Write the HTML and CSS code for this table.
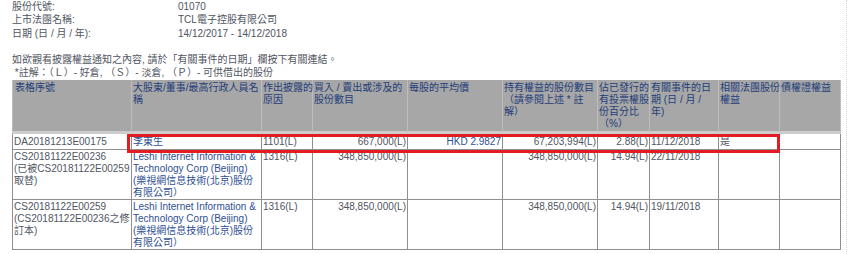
FILE: index.html
```html
<!DOCTYPE html>
<html lang="zh-Hant">
<head>
<meta charset="utf-8">
<title>披露權益</title>
<link rel="stylesheet" href="styles.css">
</head>
<body>
<div class="page">
  <div class="info">
    <div class="label">股份代號:</div><div class="value">01070</div>
    <div class="label">上市法團名稱:</div><div class="value">TCL電子控股有限公司</div>
    <div class="label">日期 (日 / 月 / 年):</div><div class="value">14/12/2017 - 14/12/2018</div>
  </div>
  <div class="notes">
    <p>如欲觀看披露權益通知之內容, 請於「有關事件的日期」欄按下有關連結。</p>
    <p>&nbsp;*註解：（Ｌ）- 好倉, （Ｓ）- 淡倉, （Ｐ）- 可供借出的股份</p>
  </div>
  <div class="table-wrap">
    <table class="grid">
      <colgroup>
        <col class="c1"><col class="c2"><col class="c3"><col class="c4"><col class="c5">
        <col class="c6"><col class="c7"><col class="c8"><col class="c9"><col class="c10">
      </colgroup>
      <thead>
        <tr>
          <th>表格序號</th>
          <th>大股東/董事/最高行政人員名<br>稱</th>
          <th>作出披露的<br>原因</th>
          <th>買入 / 賣出或涉及的<br>股份數目</th>
          <th>每股的平均價</th>
          <th>持有權益的股份數目<br>（請參閱上述 * 註<br>解）</th>
          <th>佔已發行的<br>有投票權股<br>份百分比<br>（%）</th>
          <th>有關事件的日<br>期 (日 / 月 /<br>年)</th>
          <th>相關法團股份<br>權益</th>
          <th>債權證權益</th>
        </tr>
      </thead>
      <tbody>
        <tr class="first">
          <td>DA20181213E00175</td>
          <td class="link">李東生</td>
          <td>1101(L)</td>
          <td class="num">667,000(L)</td>
          <td class="num link">HKD 2.9827</td>
          <td class="num">67,203,994(L)</td>
          <td class="num">2.88(L)</td>
          <td>11/12/2018</td>
          <td>是</td>
          <td></td>
        </tr>
        <tr>
          <td>CS20181122E00236<br>(已被CS20181122E00259<br>取替)</td>
          <td class="link">Leshi Internet Information &amp;<br>Technology Corp (Beijing)<br>(樂視網信息技術(北京)股份<br>有限公司）</td>
          <td>1316(L)</td>
          <td class="num">348,850,000(L)</td>
          <td class="num"></td>
          <td class="num">348,850,000(L)</td>
          <td class="num">14.94(L)</td>
          <td>22/11/2018</td>
          <td></td>
          <td></td>
        </tr>
        <tr>
          <td>CS20181122E00259<br>(CS20181122E00236之修<br>訂本)</td>
          <td class="link">Leshi Internet Information &amp;<br>Technology Corp (Beijing)<br>(樂視網信息技術(北京)股份<br>有限公司）</td>
          <td>1316(L)</td>
          <td class="num">348,850,000(L)</td>
          <td class="num"></td>
          <td class="num">348,850,000(L)</td>
          <td class="num">14.94(L)</td>
          <td>19/11/2018</td>
          <td></td>
          <td></td>
        </tr>
      </tbody>
    </table>
    <div class="highlight"></div>
  </div>
</div>
</body>
</html>
```
FILE: styles.css
```css
html, body {
  margin: 0;
  padding: 0;
  background: #ffffff;
}
body {
  font-family: "Liberation Sans", "Noto Sans CJK TC", sans-serif;
  font-size: 10px;
  color: #50555f;
}
.page {
  width: 847px;
  min-height: 254px;
  box-sizing: border-box;
  padding-left: 12px;
  border-right: 1px dotted #d4d4d4;
}
.info {
  display: grid;
  grid-template-columns: 166px auto;
  line-height: 13.3px;
  padding-bottom: 13.3px;
}
.notes p {
  margin: 0;
  line-height: 13.3px;
  white-space: nowrap;
}
.table-wrap {
  position: relative;
  width: 829px;
}
.grid {
  table-layout: fixed;
  width: 829px;
  border-collapse: separate;
  border-spacing: 0;
  line-height: 12px;
}
.c1 { width: 120px; }
.c2 { width: 130px; }
.c3 { width: 51px; }
.c4 { width: 95px; }
.c5 { width: 95px; }
.c6 { width: 95px; }
.c7 { width: 52px; }
.c8 { width: 69px; }
.c9 { width: 61px; }
.c10 { width: 61px; }
.grid th {
  background: #a7a7a7;
  color: #1f3d7a;
  font-weight: normal;
  text-align: left;
  vertical-align: top;
  white-space: nowrap;
  overflow: visible;
  padding: 2px 0 1px 1px;
  height: 48px;
  border-right: 1px solid #bdbdbd;
  border-bottom: 3px solid #cdcdcd;
}
.grid th:first-child {
  border-left: 1px solid #bdbdbd;
  padding-left: 2px;
}
.grid td {
  vertical-align: top;
  white-space: nowrap;
  overflow: visible;
  padding: 1px 1px 0 1px;
  height: 48px;
  border-right: 1px solid #8f8f8f;
  border-bottom: 1px solid #8f8f8f;
}
.grid td:first-child {
  border-left: 1px solid #8f8f8f;
}
.grid tr.first td {
  padding-top: 2px;
  padding-bottom: 1px;
  height: 12px;
}
.grid td.num {
  text-align: right;
}
.grid td.link {
  color: #2e4f93;
}
.highlight {
  position: absolute;
  left: 115px;
  top: 54px;
  width: 653px;
  height: 19px;
  box-sizing: border-box;
  border: 3px solid #e31b23;
  pointer-events: none;
}
```
